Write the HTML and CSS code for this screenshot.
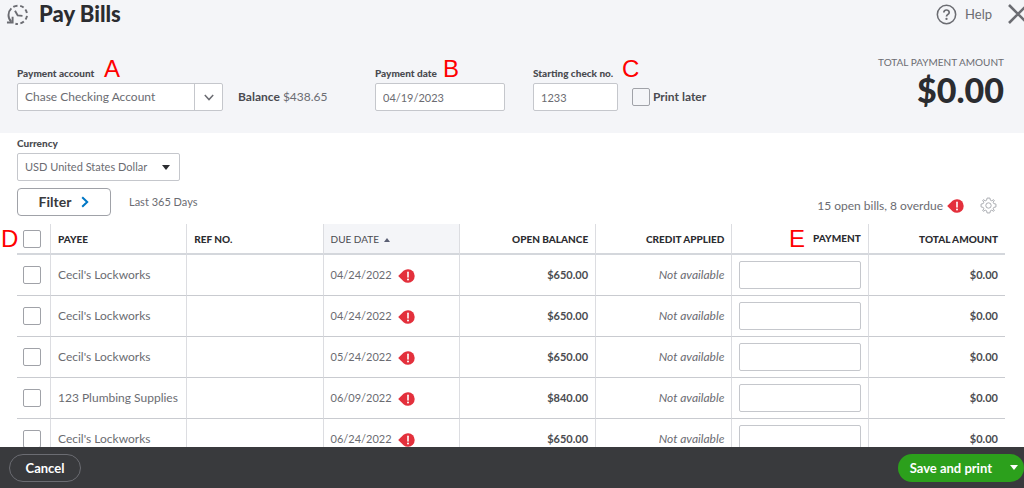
FILE: index.html
```html
<!DOCTYPE html>
<html lang="en">
<head>
    <meta charset="UTF-8">
    <meta name="viewport" content="width=device-width, initial-scale=1.0">
    <title>Pay Bills</title>
    <link rel="stylesheet" href="styles.css">
</head>
<body>
    <!-- Shared icons -->
    <svg class="sprite" aria-hidden="true">
        <symbol id="icon-overdue" viewBox="0 0 17 14">
            <path d="M0.2 7 L5.5 1.8 A6.8 6.8 0 1 1 5.5 12.2 Z" fill="#e3303c" />
            <path d="M10 3.2 V8" stroke="white" stroke-width="1.6" stroke-linecap="round" />
            <circle cx="10" cy="10.5" r="1" fill="white" />
        </symbol>
    </svg>

    <header class="page-header">
        <div class="title-bar">
            <svg class="history-icon" viewBox="0 0 24 24" fill="none" stroke="#6b6c72" stroke-width="2">
                <path d="M5.6 19.6 C1.4 15.6 1.8 9.2 5.6 5.6" />
                <path d="M7.6 4.1 A10 10 0 0 1 12 2.8" />
                <path d="M14.8 3 A10 10 0 0 1 18.4 4.8" />
                <path d="M20.2 6.8 A10 10 0 0 1 21.8 10.4" />
                <path d="M21.9 13.4 A10 10 0 0 1 20.4 17.2" />
                <path d="M18.6 19.3 A10 10 0 0 1 15 21.3" />
                <path d="M12.4 21.9 A10 10 0 0 1 9.8 21.6" />
                <path d="M1 20.4 H6.9 V14.4" />
                <path d="M9.4 8 L12.2 13 L17.2 13.4" />
            </svg>
            <h1>Pay Bills</h1>
            <button type="button" class="plain-button help">
                <svg class="help-icon" viewBox="0 0 22 22" fill="none" stroke="#6b6c72" stroke-width="1.6">
                    <circle cx="11" cy="11" r="9.6" />
                    <path d="M8.2 9 C8.2 5.4 13.8 5.4 13.8 8.8 C13.8 11 11 10.8 11 13.2" stroke-width="1.8" />
                    <circle cx="11" cy="15.6" r="1.2" fill="#6b6c72" stroke="none" />
                </svg>
                Help
            </button>
            <button type="button" class="plain-button close" aria-label="Close">
                <svg class="close-icon" viewBox="0 0 20 20" fill="none" stroke="#6b6c72" stroke-width="2.6">
                    <path d="M1 1 L19 19 M19 1 L1 19" />
                </svg>
            </button>
        </div>

        <div class="payment-bar">
            <div class="field field-account">
                <label for="account">Payment account</label>
                <span class="marker">A</span>
                <div class="select-box">
                    <select id="account">
                        <option>Chase Checking Account</option>
                    </select>
                    <span class="select-arrow">
                        <svg viewBox="0 0 10 7" fill="none" stroke="#6b6c72" stroke-width="1.5">
                            <path d="M0.8 1 L5 5.6 L9.2 1" />
                        </svg>
                    </span>
                </div>
            </div>
            <p class="balance"><strong>Balance</strong> $438.65</p>
            <div class="field field-date">
                <label for="payment-date">Payment date</label>
                <span class="marker">B</span>
                <input type="text" id="payment-date" value="04/19/2023">
            </div>
            <div class="field field-check">
                <label for="check-no">Starting check no.</label>
                <span class="marker">C</span>
                <input type="text" id="check-no" value="1233">
            </div>
            <label class="print-later"><input type="checkbox">Print later</label>
            <div class="total">
                <div class="total-label">TOTAL PAYMENT AMOUNT</div>
                <div class="total-amount">$0.00</div>
            </div>
        </div>
    </header>

    <main>
        <div class="field field-currency">
            <label for="currency">Currency</label>
            <div class="select-box">
                <select id="currency">
                    <option>USD United States Dollar</option>
                </select>
                <span class="caret"></span>
            </div>
        </div>

        <div class="toolbar">
            <button type="button" class="filter">
                Filter
                <svg viewBox="0 0 8 12" fill="none" stroke="#0077c5" stroke-width="2">
                    <path d="M1.2 1.2 L6.2 6 L1.2 10.8" />
                </svg>
            </button>
            <span class="range">Last 365 Days</span>
            <span class="summary">15 open bills, 8 overdue <svg class="overdue-icon"><use href="#icon-overdue" /></svg></span>
            <button type="button" class="plain-button settings" aria-label="Table settings">
                <svg viewBox="0 0 24 24" fill="none" stroke="#a9abb0" stroke-width="1.4" stroke-linejoin="round">
                    <path d="M10 1.5 H14 L14.7 4.6 L16.6 5.4 L19.3 3.8 L20.2 4.7 L18.6 7.4 L19.4 9.3 L22.5 10 V14 L19.4 14.7 L18.6 16.6 L20.2 19.3 L19.3 20.2 L16.6 18.6 L14.7 19.4 L14 22.5 H10 L9.3 19.4 L7.4 18.6 L4.7 20.2 L3.8 19.3 L5.4 16.6 L4.6 14.7 L1.5 14 V10 L4.6 9.3 L5.4 7.4 L3.8 4.7 L4.7 3.8 L7.4 5.4 L9.3 4.6 Z" />
                    <circle cx="12" cy="12" r="3.8" />
                </svg>
            </button>
        </div>

        <table class="bills">
            <thead>
                <tr>
                    <th class="col-check"><span class="marker">D</span><input type="checkbox" aria-label="Select all bills"></th>
                    <th>PAYEE</th>
                    <th>REF NO.</th>
                    <th class="sorted">DUE DATE <span class="sort-arrow"></span></th>
                    <th class="number">OPEN BALANCE</th>
                    <th class="number">CREDIT APPLIED</th>
                    <th class="number"><span class="marker">E</span>PAYMENT</th>
                    <th class="number">TOTAL AMOUNT</th>
                </tr>
            </thead>
            <tbody>
                <tr>
                    <td class="col-check"><input type="checkbox" aria-label="Select bill"></td>
                    <td>Cecil's Lockworks</td>
                    <td></td>
                    <td class="date">04/24/2022 <svg class="overdue-icon"><use href="#icon-overdue" /></svg></td>
                    <td class="number amount">$650.00</td>
                    <td class="number credit">Not available</td>
                    <td class="payment"><input type="text" aria-label="Payment"></td>
                    <td class="number amount">$0.00</td>
                </tr>
                <tr>
                    <td class="col-check"><input type="checkbox" aria-label="Select bill"></td>
                    <td>Cecil's Lockworks</td>
                    <td></td>
                    <td class="date">04/24/2022 <svg class="overdue-icon"><use href="#icon-overdue" /></svg></td>
                    <td class="number amount">$650.00</td>
                    <td class="number credit">Not available</td>
                    <td class="payment"><input type="text" aria-label="Payment"></td>
                    <td class="number amount">$0.00</td>
                </tr>
                <tr>
                    <td class="col-check"><input type="checkbox" aria-label="Select bill"></td>
                    <td>Cecil's Lockworks</td>
                    <td></td>
                    <td class="date">05/24/2022 <svg class="overdue-icon"><use href="#icon-overdue" /></svg></td>
                    <td class="number amount">$650.00</td>
                    <td class="number credit">Not available</td>
                    <td class="payment"><input type="text" aria-label="Payment"></td>
                    <td class="number amount">$0.00</td>
                </tr>
                <tr>
                    <td class="col-check"><input type="checkbox" aria-label="Select bill"></td>
                    <td>123 Plumbing Supplies</td>
                    <td></td>
                    <td class="date">06/09/2022 <svg class="overdue-icon"><use href="#icon-overdue" /></svg></td>
                    <td class="number amount">$840.00</td>
                    <td class="number credit">Not available</td>
                    <td class="payment"><input type="text" aria-label="Payment"></td>
                    <td class="number amount">$0.00</td>
                </tr>
                <tr>
                    <td class="col-check"><input type="checkbox" aria-label="Select bill"></td>
                    <td>Cecil's Lockworks</td>
                    <td></td>
                    <td class="date">06/24/2022 <svg class="overdue-icon"><use href="#icon-overdue" /></svg></td>
                    <td class="number amount">$650.00</td>
                    <td class="number credit">Not available</td>
                    <td class="payment"><input type="text" aria-label="Payment"></td>
                    <td class="number amount">$0.00</td>
                </tr>
            </tbody>
        </table>
    </main>

    <footer class="action-bar">
        <button type="button" class="cancel">Cancel</button>
        <div class="save-group">
            <button type="button" class="save">Save and print</button>
            <button type="button" class="save-more" aria-label="More save options"><span class="caret"></span></button>
        </div>
    </footer>
</body>
</html>
```
FILE: styles.css
```css
* {
    box-sizing: border-box;
}

body {
    margin: 0;
    height: 100vh;
    display: flex;
    flex-direction: column;
    overflow: hidden;
    font-family: Lato, 'Liberation Sans', sans-serif;
    font-size: 12px;
    line-height: 16px;
    color: #6b6c72;
    background-color: white;
}

h1, p {
    margin: 0;
}

button, input, select {
    font: inherit;
    color: inherit;
}

.sprite {
    position: absolute;
    width: 0;
    height: 0;
}

.plain-button {
    display: flex;
    align-items: center;
    padding: 0;
    border: none;
    background: none;
}

/* Header */
.page-header {
    flex: none;
    background-color: #f4f5f8;
}

.title-bar {
    display: flex;
    align-items: center;
    height: 28px;
    padding-left: 6px;
    overflow: hidden;
}

.history-icon {
    width: 23px;
    height: 23px;
}

h1 {
    margin-left: 10px;
    font-size: 22px;
    line-height: 28px;
    font-weight: 900;
    color: #2b2c30;
}

.help {
    gap: 8px;
    margin-left: auto;
    font-size: 13px;
}

.help-icon {
    width: 21px;
    height: 21px;
}

.close {
    margin: 0 -4px 0 16px;
}

.close-icon {
    width: 20px;
    height: 20px;
}

.payment-bar {
    display: flex;
    align-items: flex-end;
    padding: 28px 20px 22px 17px;
}

.field {
    position: relative;
}

.field label {
    display: block;
    margin-bottom: 2px;
    font-size: 10px;
    font-weight: 900;
    color: #4a4b50;
    white-space: nowrap;
}

.field .marker {
    position: absolute;
    top: -8px;
}

.field input,
.select-box select {
    display: block;
    width: 100%;
    height: 28px;
    padding: 0 7px;
    border: 1px solid #c5c7cc;
    border-radius: 2px;
    background-color: white;
}

.field input,
.field-currency select {
    font-size: 11px;
}

.marker {
    font-family: 'Liberation Sans', Arial, sans-serif;
    font-size: 24px;
    line-height: 24px;
    font-weight: normal;
    color: #ff0000;
}

.field-account {
    width: 206px;
}

.field-account .marker {
    left: 87px;
}

.field-date {
    width: 130px;
    margin-left: 46px;
}

.field-date .marker {
    left: 68px;
}

.field-check {
    width: 85px;
    margin-left: 28px;
}

.field-check .marker {
    left: 89px;
}

.select-box {
    position: relative;
}

.select-box select {
    appearance: none;
}

.select-arrow {
    position: absolute;
    top: 1px;
    right: 1px;
    bottom: 1px;
    display: flex;
    align-items: center;
    justify-content: center;
    width: 28px;
    border-left: 1px solid #c5c7cc;
    pointer-events: none;
}

.select-arrow svg {
    width: 10px;
    height: 7px;
}

.caret {
    border: 4px solid transparent;
    border-top: 5px solid currentColor;
    border-bottom: none;
}

.select-box .caret {
    position: absolute;
    top: 12px;
    right: 10px;
    color: #2b2c30;
    pointer-events: none;
}

.balance {
    width: 91px;
    margin-left: 15px;
    padding-bottom: 6px;
    white-space: nowrap;
}

.balance strong {
    color: #4a4b50;
}

input[type="checkbox"] {
    appearance: none;
    flex: none;
    display: block;
    width: 18px;
    height: 18px;
    margin: 0;
    border: 1px solid #a0a2a8;
    border-radius: 2px;
}

.print-later {
    display: flex;
    align-items: center;
    gap: 3px;
    margin-left: 14px;
    padding-bottom: 5px;
    font-weight: bold;
    color: #4a4b50;
}

.total {
    margin-left: auto;
    text-align: right;
}

.total-label {
    font-size: 10px;
    line-height: 12px;
}

.total-amount {
    font-size: 34px;
    line-height: 43px;
    font-weight: 900;
    color: #2b2c30;
}

/* Bill list */
main {
    flex: 1;
    min-height: 0;
    overflow: hidden;
    padding: 2px 19px 0 17px;
}

.field-currency {
    width: 163px;
}

.toolbar {
    display: flex;
    align-items: center;
    padding: 7px 8px 8px 0;
}

.filter {
    display: flex;
    align-items: center;
    justify-content: center;
    gap: 10px;
    width: 94px;
    height: 28px;
    border: 1px solid #a0a2a8;
    border-radius: 4px;
    background-color: white;
    font-size: 14px;
    font-weight: bold;
    color: #393a3d;
}

.filter svg {
    width: 8px;
    height: 12px;
}

.range {
    margin-left: 18px;
    font-size: 11px;
}

.summary {
    display: flex;
    align-items: center;
    gap: 4px;
    margin-left: auto;
    padding-top: 7px;
}

.overdue-icon {
    width: 17px;
    height: 14px;
}

.settings {
    margin-left: 16px;
    padding-top: 7px;
}

.settings svg {
    width: 17px;
    height: 17px;
}

.bills {
    width: 100%;
    table-layout: fixed;
    border-collapse: separate;
    border-spacing: 0;
}

.bills th,
.bills td {
    padding: 0 7px;
    border-right: 1px solid #dcdde1;
    border-bottom: 1px solid #c9cbd0;
    text-align: left;
    white-space: nowrap;
}

.bills th {
    height: 31px;
    border-bottom: 2px solid #d4d7dc;
    font-size: 10px;
    font-weight: 900;
    color: #2b2c30;
}

.bills td {
    height: 41px;
}

.bills th:last-child,
.bills td:last-child {
    border-right: none;
}

.bills .col-check {
    position: relative;
    width: 34px;
    padding: 0 6px;
}

.col-check .marker {
    position: absolute;
    top: 3px;
    left: -16px;
}

.bills .sorted {
    background-color: #f4f5f8;
    font-weight: normal;
    color: #4a4b50;
}

.sort-arrow {
    display: inline-block;
    margin-left: 2px;
    border: 3px solid transparent;
    border-top: none;
    border-bottom: 4px solid #5a5f73;
    vertical-align: middle;
}

.bills .number {
    text-align: right;
}

.bills th .marker {
    vertical-align: middle;
}

th.number .marker {
    margin-right: 8px;
}

.bills td .overdue-icon {
    margin-left: 4px;
    vertical-align: middle;
}

.bills .date {
    font-size: 11px;
}

.bills .amount {
    font-size: 11px;
    font-weight: bold;
    color: #4a4b50;
}

.bills .credit {
    font-style: italic;
}

.bills .payment input {
    display: block;
    width: 100%;
    height: 28px;
    padding: 0 7px;
    border: 1px solid #c5c7cc;
    border-radius: 2px;
}

/* Footer */
.action-bar {
    flex: none;
    display: flex;
    align-items: center;
    justify-content: space-between;
    height: 41px;
    padding-left: 9px;
    background-color: #393a3d;
}

.action-bar button {
    height: 28px;
    font-size: 13px;
    font-weight: bold;
    color: white;
}

.cancel {
    width: 72px;
    padding: 0;
    border: 1px solid #6b6c72;
    border-radius: 14px;
    background: none;
}

.save-group {
    display: flex;
    border-radius: 14px;
    background-color: #2ca01c;
}

.save-group button {
    border: none;
    background: none;
}

.save {
    padding: 0 12px;
}

.save-more {
    display: flex;
    align-items: center;
    padding: 0 6px;
}
```
